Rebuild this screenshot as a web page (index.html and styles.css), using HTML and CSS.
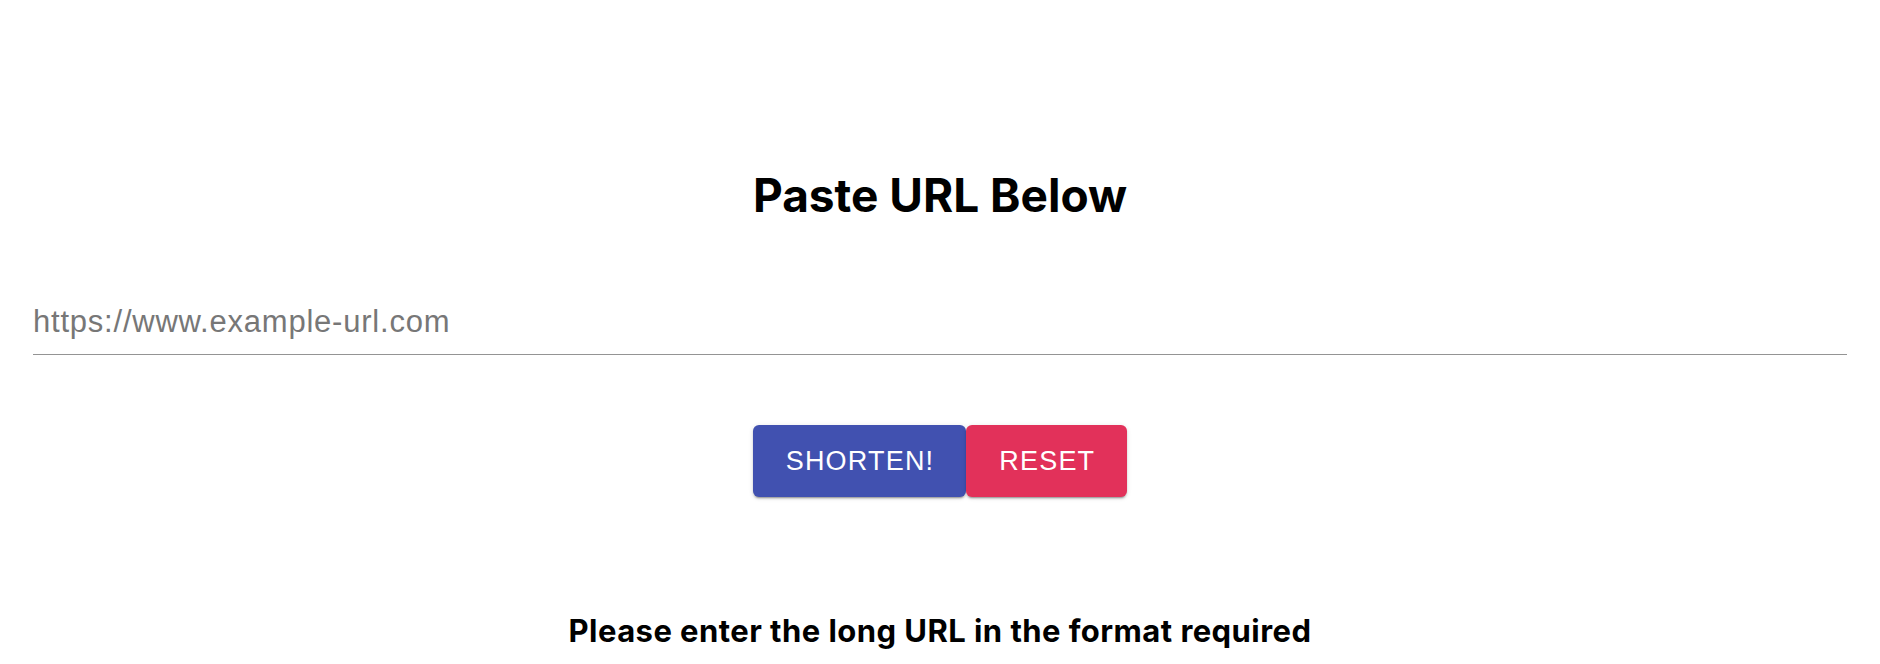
FILE: index.html
```html
<!DOCTYPE html>
<html lang="en">
<head>
<meta charset="utf-8">
<title>URL Shortener</title>
<link rel="stylesheet" href="styles.css">
</head>
<body>
<main class="page">
  <h1 class="title">Paste URL Below</h1>
  <form class="form">
    <input class="url-input" type="text" placeholder="https://www.example-url.com">
    <div class="actions">
      <button type="button" class="btn btn-primary">SHORTEN!</button>
      <button type="button" class="btn btn-danger">RESET</button>
    </div>
  </form>
  <p class="hint">Please enter the long URL in the format required</p>
</main>
</body>
</html>
```

FILE: styles.css
```css
html, body {
  margin: 0;
  padding: 0;
  background: #ffffff;
}

.page {
  display: flex;
  flex-direction: column;
  align-items: center;
  padding: 168px 33px 0;
  font-family: Inter, "Liberation Sans", sans-serif;
  color: #000;
}

.title {
  margin: 0;
  font-family: Inter, sans-serif;
  font-weight: 700;
  font-size: 46px;
  line-height: 54px;
}

.form {
  align-self: stretch;
  display: flex;
  flex-direction: column;
  align-items: center;
  margin-top: 82px;
}

.url-input {
  align-self: stretch;
  box-sizing: content-box;
  height: 36px;
  padding: 0 0 14px;
  margin: 0;
  border: none;
  border-bottom: 1px solid #949494;
  outline: none;
  background: transparent;
  font-family: "Liberation Sans", Arial, sans-serif;
  font-size: 31px;
  letter-spacing: 0.78px;
  color: #222;
}

.url-input::placeholder {
  color: #777777;
  opacity: 1;
}

.actions {
  display: flex;
  margin-top: 70px;
}

.btn {
  height: 72px;
  padding: 0 32px 0 33px;
  border: none;
  border-radius: 6px;
  font-family: "Liberation Sans", Arial, sans-serif;
  font-size: 27px;
  letter-spacing: 1.2px;
  color: #ffffff;
  cursor: pointer;
  box-shadow: 0 3px 1px -2px rgba(0,0,0,0.2), 0 2px 2px 0 rgba(0,0,0,0.14), 0 1px 5px 0 rgba(0,0,0,0.12);
}

.btn-primary {
  background: #4151b0;
}

.btn-danger {
  background: #e2315a;
}

.hint {
  margin: 116px 0 0;
  font-family: Inter, sans-serif;
  font-weight: 700;
  font-size: 31px;
  letter-spacing: 0.45px;
  line-height: 36px;
}
```
